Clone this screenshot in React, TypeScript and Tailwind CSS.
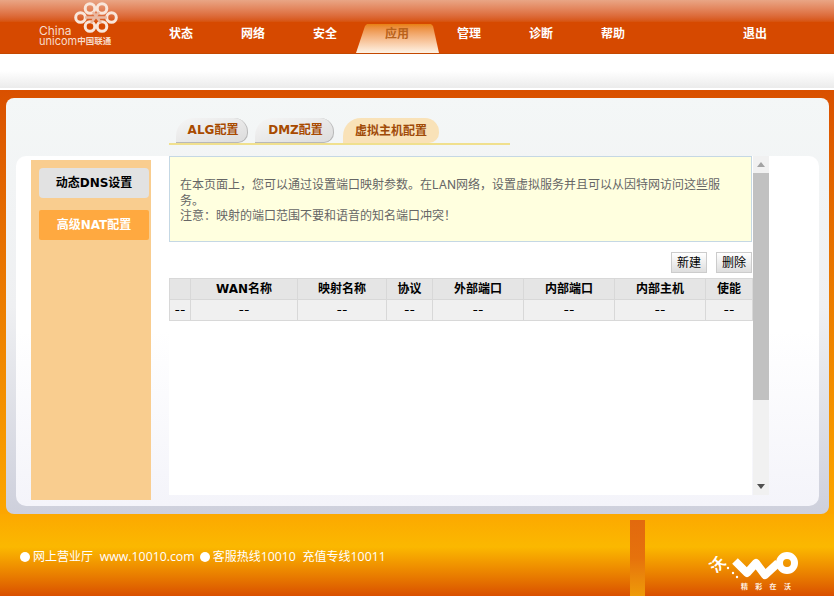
const font = "font-['Inter','Noto_Sans_CJK_SC','Noto_Sans_CJK_JP',sans-serif]";
const boldFont = "font-['DejaVu_Sans','Noto_Sans_CJK_SC',sans-serif] font-bold";
const footerLatin = "font-['Open_Sans',sans-serif] text-[12.3px]";

const navItems = ["状态", "网络", "安全", "应用", "管理", "诊断", "帮助"];
const columns = ["", "WAN名称", "映射名称", "协议", "外部端口", "内部端口", "内部主机", "使能"];
const widths = ["w-[21px]", "w-[107px]", "w-[89px]", "w-[46px]", "w-[91px]", "w-[91px]", "w-[91px]", "w-[47px]"];

function UnicomKnot() {
  return (
    <svg width="44" height="31" viewBox="0 0 44 31" fill="none" stroke="#f9e6da" strokeWidth="3" strokeLinejoin="round">
      <circle cx="16" cy="6.5" r="4.8" />
      <circle cx="28" cy="6.5" r="4.8" />
      <circle cx="6.5" cy="15.5" r="4.8" />
      <circle cx="37.5" cy="15.5" r="4.8" />
      <circle cx="16" cy="24.5" r="4.8" />
      <circle cx="28" cy="24.5" r="4.8" />
      <path d="M19 10 L27 21 M25 10 L17 21 M11 15.5 L33 15.5" stroke="#e9b9a2" strokeWidth="2.6" />
    </svg>
  );
}

function WoLogo() {
  return (
    <div className="flex flex-col items-end">
      <div className="flex items-center">
        <span className="text-[15px] font-bold leading-none text-white -rotate-45 mb-[4px]">沃</span>
        <svg width="74" height="28" viewBox="0 0 74 28" fill="none">
          <circle cx="3" cy="16" r="1.2" fill="#fff" />
          <circle cx="8" cy="21" r="1.2" fill="#fff" />
          <circle cx="12" cy="25" r="1.2" fill="#fff" />
          <path d="M10 9 L22 21 L31 11 L40 23 L53 11" stroke="#fff" strokeWidth="8" strokeLinejoin="round" />
          <circle cx="62" cy="11" r="7.5" stroke="#fff" strokeWidth="7" />
        </svg>
      </div>
      <div className="text-[7px] font-bold leading-[9px] tracking-[7.3px] whitespace-nowrap text-[#fff0e0] mt-[2px] mr-[8px] w-[50px]">精彩在沃</div>
    </div>
  );
}

function Tab({ label, active, className }: { label: string; active?: boolean; className: string }) {
  return (
    <div
      className={`h-[25px] flex items-center justify-center rounded-tl-[18px] rounded-tr-[14px] rounded-br-[10px] text-[12px] ${boldFont} ${
        active
          ? "bg-[#f9e2b8] text-[#a04a08]"
          : "pl-[3px] bg-gradient-to-br from-[#f6f6f6] to-[#dcdcdc] border-r border-b border-[#b8b8b8] text-[#a84a00]"
      } ${className}`}
    >
      {label}
    </div>
  );
}

function ScrollBar() {
  return (
    <div className="w-[16px] h-[339px] bg-[#f1f1f1] flex flex-col items-center ml-[1px]">
      <div className="h-[17px] flex items-center justify-center">
        <div className="w-0 h-0 border-x-[4px] border-x-transparent border-b-[5px] border-b-[#a3a3a3]" />
      </div>
      <div className="w-full h-[227px] bg-[#c1c1c1]" />
      <div className="flex-1" />
      <div className="h-[17px] flex items-center justify-center">
        <div className="w-0 h-0 border-x-[4px] border-x-transparent border-t-[5px] border-t-[#505050]" />
      </div>
    </div>
  );
}

export default function App() {
  return (
    <div className={`w-[834px] h-[596px] overflow-hidden relative flex flex-col ${font}`}>
      {/* header */}
      <div className="h-[22px] bg-gradient-to-b from-[#e9a585] to-[#d65208]" />
      <div className="h-[32px] bg-[#d64900] border-b border-[#c44800] flex">
        <div className="w-[145px]" />
        {navItems.map((item) =>
          item === "应用" ? (
            <div key={item} className="w-[72px] h-[24px] relative flex items-center justify-center">
              <div className="absolute left-[-5px] top-[2px] w-[83px] h-[29px] bg-gradient-to-b from-[#e8800a] to-[#fdf3e6] [clip-path:polygon(9px_2px,11px_0,75px_0,77px_2px,83px_100%,0_100%)]" />
              <span className={`relative text-[12px] text-[#b9621a] ${boldFont}`}>{item}</span>
            </div>
          ) : (
            <div key={item} className={`w-[72px] h-[24px] flex items-center justify-center text-[12px] text-white ${boldFont}`}>
              {item}
            </div>
          )
        )}
        <div className="w-[70px]" />
        <div className={`w-[72px] h-[24px] flex items-center justify-center text-[12px] text-white ${boldFont}`}>退出</div>
      </div>
      <div className="absolute left-[74px] top-[2px]">
        <UnicomKnot />
      </div>
      <div className="absolute left-[39px] top-[26px] text-[#f8dccb]">
        <div className="text-[12px] leading-[10px]">China</div>
        <div className="flex items-end text-[11px] leading-[10px] whitespace-nowrap">
          unicom<span className="text-[8.5px] font-bold leading-[9px]">中国联通</span>
        </div>
      </div>
      <div className="h-[34px] bg-gradient-to-b from-white via-white to-[#ebebeb]" />
      <div className="h-[2px] bg-white" />

      {/* main */}
      <div className="h-[424px] bg-gradient-to-b from-[#d95000] to-[#fca600] px-[5px] pt-[8px]">
        <div className="h-[416px] ml-[1px] rounded-[8px] bg-gradient-to-b from-[#f4f7f7] via-[#eff0f2] to-[#ced0dc] pt-[20px] flex flex-col">
          {/* tabs */}
          <div className="pl-[163px]">
            <div className="w-[341px] h-[27px] border-b-2 border-[#f0e08e] flex">
              <Tab label="ALG配置" className="w-[72px] ml-[7px]" />
              <Tab label="DMZ配置" className="w-[79px] ml-[7px]" />
              <Tab label="虚拟主机配置" active className="w-[96px] ml-[9px]" />
            </div>
          </div>
          {/* card */}
          <div className="mx-[10px] mt-[11px] h-[350px] rounded-[10px] bg-gradient-to-b from-white via-white to-[#f4f4fa] flex pl-[15px]">
            <div className={`w-[120px] h-[340px] mt-[4px] bg-[#f9cd8f] pl-[8px] pt-[8px] flex flex-col gap-[12px] text-[12px] ${boldFont}`}>
              <div className="w-[110px] h-[30px] rounded-[4px] bg-[#e2e2e2] flex items-center justify-center text-black">
                动态DNS设置
              </div>
              <div className="w-[110px] h-[30px] rounded-[2px] bg-[#ffa940] flex items-center justify-center text-white">
                高级NAT配置
              </div>
            </div>
            <div className="w-[583px] h-[339px] ml-[18px] bg-white">
              <div className="h-[86px] border border-[#c5d8e4] bg-[#ffffdf] pl-[10px] pr-[10px] pt-[20px] text-[12px] leading-[15.5px] text-[#666666]">
                在本页面上，您可以通过设置端口映射参数。在LAN网络，设置虚拟服务并且可以从因特网访问这些服务。
                <br />
                注意：映射的端口范围不要和语音的知名端口冲突！
              </div>
              <div className="flex justify-end gap-[9px] mt-[10px]">
                <button className="w-[36px] h-[21px] border border-[#cccccc] bg-gradient-to-b from-white to-[#dedede] text-[12px] text-black">
                  新建
                </button>
                <button className="w-[36px] h-[21px] border border-[#cccccc] bg-gradient-to-b from-white to-[#dedede] text-[12px] text-black">
                  删除
                </button>
              </div>
              <table className="mt-[5px] w-[583px] table-fixed border-collapse text-[12px] text-black">
                <thead>
                  <tr className="h-[21px] bg-[#e5e5e5]">
                    {columns.map((c, i) => (
                      <th key={i} className={`border border-[#d8d8d8] p-0 ${boldFont} ${widths[i]}`}>
                        {c}
                      </th>
                    ))}
                  </tr>
                </thead>
                <tbody>
                  <tr className="h-[21px] bg-[#f0f0f0]">
                    {columns.map((_, i) => (
                      <td key={i} className="border border-[#d8d8d8] text-center p-0">
                        --
                      </td>
                    ))}
                  </tr>
                </tbody>
              </table>
            </div>
            <ScrollBar />
          </div>
        </div>
      </div>

      {/* footer */}
      <div className="flex-1 bg-gradient-to-b from-[#fca800] via-[#fbb800] via-40% to-[#d94f00] flex relative">
        <div className="pl-[20px] pt-[35px] flex items-start gap-[3px] text-[12px] leading-[16px] text-white whitespace-nowrap">
          <span className="w-[10px] h-[10px] mt-[3px] rounded-full bg-white" />
          <span>
            网上营业厅&nbsp;&nbsp;<span className={footerLatin}>www.10010.com</span>
          </span>
          <span className="w-[10px] h-[10px] mt-[3px] ml-[2px] rounded-full bg-white" />
          <span>
            客服热线<span className={footerLatin}>10010</span>&nbsp;&nbsp;充值专线<span className={footerLatin}>10011</span>
          </span>
        </div>
        <div className="absolute left-[630px] top-[6px] bottom-0 w-[15px] bg-gradient-to-b from-[#e2690e] via-[#e6720c] to-[#ee9a08]" />
        <div className="absolute left-[710px] top-[38px]">
          <WoLogo />
        </div>
      </div>
    </div>
  );
}
